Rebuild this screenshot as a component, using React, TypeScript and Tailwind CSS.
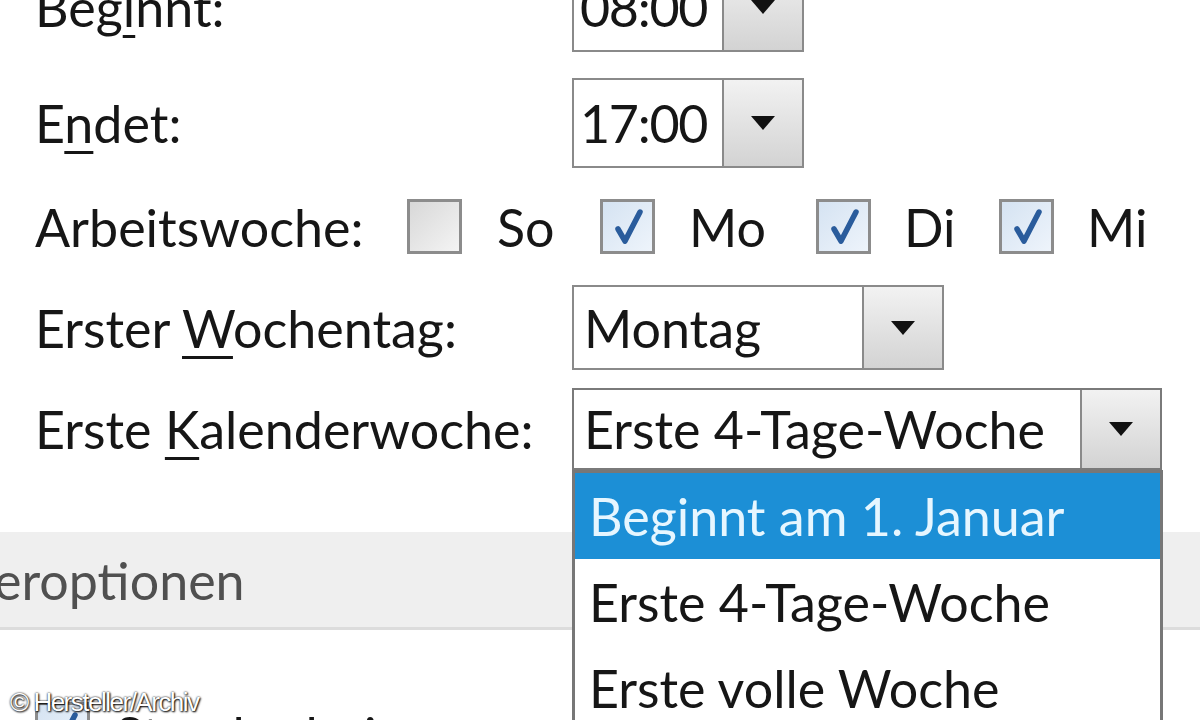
import * as React from "react"

function Arrow() {
  return (
    <div className="flex h-full w-[80px] items-center justify-center border-l-2 border-[#8a8a8a] bg-gradient-to-b from-[#f2f2f2] to-[#d3d3d3]">
      <svg width="26" height="16" viewBox="0 0 26 16">
        <path d="M1 1 L25 1 L13 15 Z" fill="#111" />
      </svg>
    </div>
  )
}

function Check({ checked }: { checked: boolean }) {
  return (
    <div
      className={
        "flex h-[55px] w-[55px] shrink-0 items-center justify-center border-[3px] border-[#8c8c8c] " +
        (checked ? "bg-gradient-to-br from-[#d5e3f2] to-[#eef4fb]" : "bg-gradient-to-br from-[#d8d8d8] to-[#f4f4f4]")
      }
    >
      {checked && (
        <svg width="34" height="38" viewBox="0 0 34 38">
          <path d="M7 21 L14 33 L29 4" fill="none" stroke="#2a5c9c" strokeWidth="5.5" strokeLinecap="round" strokeLinejoin="round" />
        </svg>
      )}
    </div>
  )
}

export default function App() {
  const font = { fontFamily: "Lato, 'Noto Sans', sans-serif" }
  return (
    <div className="relative h-[720px] w-[1200px] overflow-hidden bg-white text-[52px] text-[#161616]" style={font}>
      <div className="mt-[-38px] flex flex-col">
        {/* Beginnt */}
        <div className="flex h-[90px] items-center">
          <div className="w-[572px] pl-[35px] leading-none">
            Beg<u className="underline-offset-[8px] decoration-[3px]">i</u>nnt:
          </div>
          <div className="flex h-full w-[232px] border-2 border-[#8a8a8a] bg-white">
            <div className="flex flex-1 items-center pl-[6px] tracking-tight">08:00</div>
            <Arrow />
          </div>
        </div>
        {/* Endet */}
        <div className="mt-[26px] flex h-[90px] items-center">
          <div className="w-[572px] pl-[35px] leading-none">
            E<u className="underline-offset-[8px] decoration-[3px]">n</u>det:
          </div>
          <div className="flex h-full w-[232px] border-2 border-[#8a8a8a] bg-white">
            <div className="flex flex-1 items-center pl-[6px] tracking-tight">17:00</div>
            <Arrow />
          </div>
        </div>
        {/* Arbeitswoche */}
        <div className="flex h-[117px] items-center">
          <div className="w-[407px] pl-[35px] leading-none">Arbeitswoche:</div>
          <div className="flex items-center">
            <Check checked={false} />
            <span className="ml-[35px] w-[103px]">So</span>
            <Check checked />
            <span className="ml-[34px] w-[127px]">Mo</span>
            <Check checked />
            <span className="ml-[33px] w-[95px]">Di</span>
            <Check checked />
            <span className="ml-[33px]">Mi</span>
          </div>
        </div>
        {/* Erster Wochentag */}
        <div className="flex h-[85px] items-center">
          <div className="w-[572px] pl-[35px] leading-none">
            Erster <u className="underline-offset-[8px] decoration-[3px]">W</u>ochentag:
          </div>
          <div className="flex h-full w-[372px] border-2 border-[#8a8a8a] bg-white">
            <div className="flex flex-1 items-center pl-[10px]">Montag</div>
            <Arrow />
          </div>
        </div>
        {/* Erste Kalenderwoche */}
        <div className="mt-[18px] flex h-[82px] items-center">
          <div className="w-[572px] pl-[35px] leading-none">
            Erste <u className="underline-offset-[8px] decoration-[3px]">K</u>alenderwoche:
          </div>
          <div className="flex h-full w-[590px] border-2 border-[#7a7a7a] bg-white">
            <div className="flex flex-1 items-center pl-[10px]">Erste 4-Tage-Woche</div>
            <Arrow />
          </div>
        </div>
        {/* Section band */}
        <div className="mt-[62px] flex h-[98px] items-center border-b-[3px] border-[#dcdcdc] bg-[#efefef] text-[#505050]">
          <span className="ml-[-6px]">eroptionen</span>
        </div>
        {/* Standarderinnerung */}
        <div className="mt-[72px] flex items-start pl-[35px]">
          <Check checked />
          <span className="ml-[25px] mt-[-6px]">Standarderinnerung</span>
        </div>
      </div>

      {/* Dropdown list */}
      <div className="absolute left-[572px] top-[470px] h-[270px] w-[591px] border-x-[3px] border-t-[3px] border-[#777] bg-white">
        <div className="flex h-[86px] items-center bg-[#1c8fd6] pl-[14px] text-[#e6f6ff]">Beginnt am 1. Januar</div>
        <div className="flex h-[86px] items-center pl-[14px]">Erste 4-Tage-Woche</div>
        <div className="flex h-[86px] items-center pl-[14px]">Erste volle Woche</div>
      </div>

      {/* Watermark */}
      <div
        className="absolute left-[10px] top-[683px] text-[26px] tracking-[-1.5px] text-white [text-shadow:0_0_2px_#000,1px_1px_2px_#000]"
        style={{ fontFamily: "'Liberation Sans', Arial, sans-serif" }}
      >
        © Hersteller/Archiv
      </div>
    </div>
  )
}
